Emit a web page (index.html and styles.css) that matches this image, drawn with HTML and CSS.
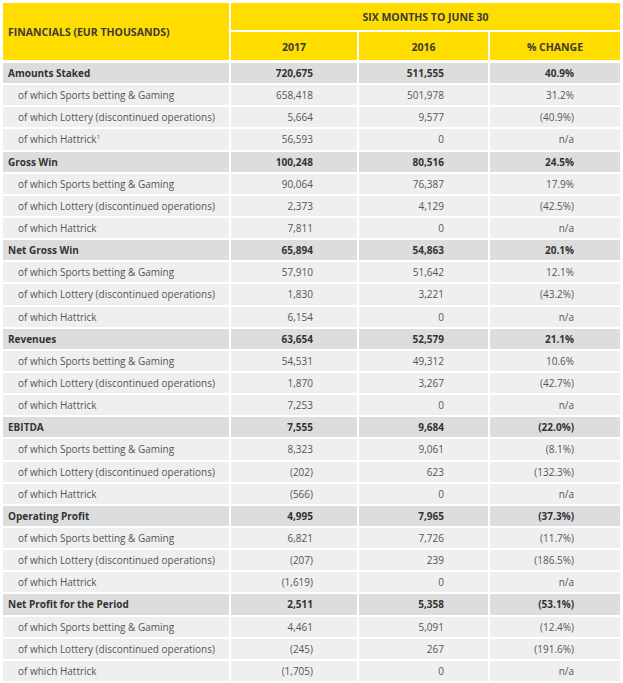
FILE: index.html
```html
<!DOCTYPE html>
<html>
<head>
<meta charset="utf-8">
<link rel="stylesheet" href="styles.css">
</head>
<body>
<table class="fin">
  <colgroup>
    <col class="c-label"><col class="c-num"><col class="c-num2"><col class="c-num3">
  </colgroup>
  <thead>
    <tr class="h1">
      <th rowspan="2" class="h-label">FINANCIALS (EUR THOUSANDS)</th>
      <th colspan="3">SIX MONTHS TO JUNE 30</th>
    </tr>
    <tr class="h2">
      <th>2017</th><th>2016</th><th>% CHANGE</th>
    </tr>
  </thead>
  <tbody>
    <tr class="main"><td>Amounts Staked</td><td>720,675</td><td>511,555</td><td>40.9%</td></tr>
    <tr class="sub"><td>of which Sports betting &amp; Gaming</td><td>658,418</td><td>501,978</td><td>31.2%</td></tr>
    <tr class="sub"><td>of which Lottery (discontinued operations)</td><td>5,664</td><td>9,577</td><td>(40.9%)</td></tr>
    <tr class="sub"><td>of which Hattrick<sup>1</sup></td><td>56,593</td><td>0</td><td>n/a</td></tr>

    <tr class="main"><td>Gross Win</td><td>100,248</td><td>80,516</td><td>24.5%</td></tr>
    <tr class="sub"><td>of which Sports betting &amp; Gaming</td><td>90,064</td><td>76,387</td><td>17.9%</td></tr>
    <tr class="sub"><td>of which Lottery (discontinued operations)</td><td>2,373</td><td>4,129</td><td>(42.5%)</td></tr>
    <tr class="sub"><td>of which Hattrick</td><td>7,811</td><td>0</td><td>n/a</td></tr>

    <tr class="main"><td>Net Gross Win</td><td>65,894</td><td>54,863</td><td>20.1%</td></tr>
    <tr class="sub"><td>of which Sports betting &amp; Gaming</td><td>57,910</td><td>51,642</td><td>12.1%</td></tr>
    <tr class="sub"><td>of which Lottery (discontinued operations)</td><td>1,830</td><td>3,221</td><td>(43.2%)</td></tr>
    <tr class="sub"><td>of which Hattrick</td><td>6,154</td><td>0</td><td>n/a</td></tr>

    <tr class="main"><td>Revenues</td><td>63,654</td><td>52,579</td><td>21.1%</td></tr>
    <tr class="sub"><td>of which Sports betting &amp; Gaming</td><td>54,531</td><td>49,312</td><td>10.6%</td></tr>
    <tr class="sub"><td>of which Lottery (discontinued operations)</td><td>1,870</td><td>3,267</td><td>(42.7%)</td></tr>
    <tr class="sub"><td>of which Hattrick</td><td>7,253</td><td>0</td><td>n/a</td></tr>

    <tr class="main"><td>EBITDA</td><td>7,555</td><td>9,684</td><td>(22.0%)</td></tr>
    <tr class="sub"><td>of which Sports betting &amp; Gaming</td><td>8,323</td><td>9,061</td><td>(8.1%)</td></tr>
    <tr class="sub"><td>of which Lottery (discontinued operations)</td><td>(202)</td><td>623</td><td>(132.3%)</td></tr>
    <tr class="sub"><td>of which Hattrick</td><td>(566)</td><td>0</td><td>n/a</td></tr>

    <tr class="main"><td>Operating Profit</td><td>4,995</td><td>7,965</td><td>(37.3%)</td></tr>
    <tr class="sub"><td>of which Sports betting &amp; Gaming</td><td>6,821</td><td>7,726</td><td>(11.7%)</td></tr>
    <tr class="sub"><td>of which Lottery (discontinued operations)</td><td>(207)</td><td>239</td><td>(186.5%)</td></tr>
    <tr class="sub"><td>of which Hattrick</td><td>(1,619)</td><td>0</td><td>n/a</td></tr>

    <tr class="main"><td>Net Profit for the Period</td><td>2,511</td><td>5,358</td><td>(53.1%)</td></tr>
    <tr class="sub"><td>of which Sports betting &amp; Gaming</td><td>4,461</td><td>5,091</td><td>(12.4%)</td></tr>
    <tr class="sub"><td>of which Lottery (discontinued operations)</td><td>(245)</td><td>267</td><td>(191.6%)</td></tr>
    <tr class="sub"><td>of which Hattrick</td><td>(1,705)</td><td>0</td><td>n/a</td></tr>
  </tbody>
</table>
</body>
</html>
```

FILE: styles.css
```css
html, body {
  margin: 0;
  padding: 0;
  background: #ffffff;
}
body {
  padding: 1px;
  font-family: "Open Sans", "Liberation Sans", sans-serif;
  font-size: 10px;
  color: #555555;
}
.fin {
  border-collapse: separate;
  border-spacing: 2px;
  table-layout: fixed;
  width: 621px;
}
.c-label { width: 226px; }
.c-num { width: 126px; }
.c-num2 { width: 129px; }
.c-num3 { width: 130px; }

.fin th {
  background: #ffdd00;
  color: #3a3a3a;
  font-weight: 700;
  font-size: 10.5px;
  text-align: center;
  padding: 0;
  height: 27px;
}
.fin th.h-label {
  text-align: left;
  padding-left: 5px;
}
.fin thead tr.h2 th {
  padding-top: 1px;
}
.fin tbody tr:first-child td {
  border-top: 1px solid #fff;
}
.fin td {
  height: 20.15px;
  padding: 0 44px 0 0;
  text-align: right;
  white-space: nowrap;
}
.fin td:first-child {
  text-align: left;
  padding: 0 0 0 15px;
}
.fin tr.main td {
  background: #dddddd;
  font-weight: 700;
  color: #333333;
}
.fin tr.main td:first-child {
  padding-left: 5px;
}
.fin tr.sub td {
  background: #efefef;
  color: #555555;
}
.fin td:last-child {
  padding-right: 46px;
}
.fin sup {
  font-size: 6px;
  vertical-align: 4px;
}
```
